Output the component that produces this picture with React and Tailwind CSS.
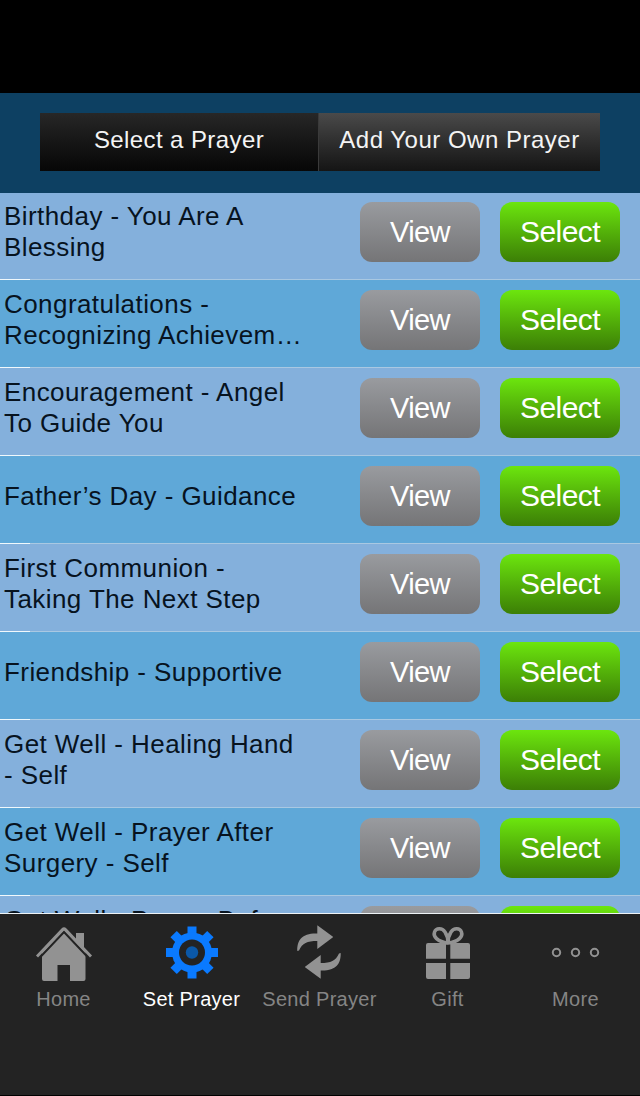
import React, { useState } from 'react';

const prayers = [
  { id: 1, lines: ['Birthday - You Are A', 'Blessing'] },
  { id: 2, lines: ['Congratulations -', 'Recognizing Achievem…'] },
  { id: 3, lines: ['Encouragement - Angel', 'To Guide You'] },
  { id: 4, lines: ['Father’s Day - Guidance'] },
  { id: 5, lines: ['First Communion -', 'Taking The Next Step'] },
  { id: 6, lines: ['Friendship - Supportive'] },
  { id: 7, lines: ['Get Well - Healing Hand', '- Self'] },
  { id: 8, lines: ['Get Well - Prayer After', 'Surgery - Self'] },
  { id: 9, lines: ['Get Well - Prayer Before', 'Surgery - Self'] },
];

const HomeIcon = () => (
  <svg width="64" height="64" viewBox="0 0 64 64" fill="#929292">
    <path d="M44 13h8v20l-8-8z" />
    <path d="M32 9 53.500 32V59q0 2-2 2H38V45H25.500v16H12q-2 0-2-2V32z" />
    <path d="M6 39.500 32 12 58 39.500" fill="none" stroke="#232323" strokeWidth="2" />
    <path d="M5 36.500 30.500 9.500q1.500-1.500 3 0L59 36.500" fill="none" stroke="#929292" strokeWidth="2.800" />
  </svg>
);

const GearIcon = () => (
  <svg width="64" height="64" viewBox="0 0 64 64" fill="#0a7aff">
    {[0, 45, 90, 135].map((angle) => (
      <rect key={angle} x="27.500" y="6.500" width="9" height="52" transform={`rotate(${angle} 32 32.500)`} />
    ))}
    <circle cx="32" cy="32.500" r="20" />
    <circle cx="32" cy="32.500" r="13" fill="#232323" />
    <circle cx="32" cy="32.500" r="6.200" fill="#0b58a8" />
  </svg>
);

const SendIcon = () => (
  <svg width="64" height="64" viewBox="0 0 64 64" fill="#929292">
    <path d="M9.300 31C9 20 14 13 29.300 13.500V5.300L45.300 17 29.300 29V21C19 21 14.500 23 11 30.500z" />
    <path d="M9.300 31C9 20 14 13 29.300 13.500V5.300L45.300 17 29.300 29V21C19 21 14.500 23 11 30.500z" transform="rotate(180 31 32)" />
  </svg>
);

const GiftIcon = () => (
  <svg width="64" height="64" viewBox="0 0 64 64" fill="#929292">
    <path d="M10 25q0-2 2-2h18v15.700H10zM34.300 23H52q2 0 2 2v13.700H34.300zM10 43h20v16H12q-2 0-2-2zM34.300 43H54v14q0 2-2 2H34.300z" />
    <path
      d="M32 23C21 22 17 16 18.500 12 20 8 26 7.500 29 12 31 15 32 18 32 23C43 22 47 16 45.500 12 44 8 38 7.500 35 12 33 15 32 18 32 23"
      fill="none"
      stroke="#929292"
      strokeWidth="3.500"
    />
  </svg>
);

const MoreIcon = () => (
  <svg width="64" height="64" viewBox="0 0 64 64" fill="none" stroke="#929292" strokeWidth="2">
    <circle cx="12.500" cy="32.500" r="3.700" />
    <circle cx="31.500" cy="32.500" r="3.700" />
    <circle cx="50.500" cy="32.500" r="3.700" />
  </svg>
);

const tabs = [
  { name: 'Home', icon: HomeIcon },
  { name: 'Set Prayer', icon: GearIcon },
  { name: 'Send Prayer', icon: SendIcon },
  { name: 'Gift', icon: GiftIcon },
  { name: 'More', icon: MoreIcon },
];

const PrayerRow = ({ prayer }) => (
  <li className="shrink-0 h-[88px] odd:bg-[#84b0dc] even:bg-[#5fa8d8]">
    <div className="h-[87px] pt-2.5 pr-5 pl-1 flex items-start gap-5">
      <div className="flex-1 h-[60px] flex flex-col justify-center text-[26px] leading-[31px] tracking-[0.43px] whitespace-nowrap text-[#07131f]">
        {prayer.lines.map((line) => (
          <span key={line}>{line}</span>
        ))}
      </div>
      <button className="w-[120px] h-[60px] rounded-xl bg-linear-to-b from-[#999b9f] to-[#757577] text-[29px] leading-[60px] tracking-[-0.6px] text-white">
        View
      </button>
      <button className="w-[120px] h-[60px] rounded-xl bg-linear-to-b from-[#6ce60e] to-[#3c7f06] text-[30px] leading-[60px] tracking-[-0.6px] text-white">
        Select
      </button>
    </div>
    <div className="h-px flex bg-[#a9c8e2]">
      <div className="w-[30px] bg-[#f0f8fc]" />
    </div>
  </li>
);

export default function App() {
  const [activeTab, setActiveTab] = useState('Set Prayer');

  return (
    <div className="w-[640px] h-[1096px] overflow-hidden flex flex-col bg-black font-['Liberation_Sans',Arial,sans-serif]">
      <div className="h-[93px] shrink-0" />
      <header className="relative z-10 h-[100px] shrink-0 px-10 pt-5 bg-[#0d4062]">
        <div className="h-[58px] flex text-2xl tracking-[0.4px] text-[#f4f4f4]">
          <button className="w-[279px] pb-1 bg-linear-to-b from-[#272727] to-[#070707] border-r border-[#3a3a3a]">
            Select a Prayer
          </button>
          <button className="flex-1 pb-1 whitespace-nowrap tracking-[0.5px] bg-linear-to-b from-[#4a4a4a] to-[#151515]">
            Add Your Own Prayer
          </button>
        </div>
      </header>

      <ul className="-mt-px h-[721px] shrink-0 overflow-hidden flex flex-col">
        {prayers.map((prayer) => (
          <PrayerRow key={prayer.id} prayer={prayer} />
        ))}
      </ul>

      <nav className="h-[182px] shrink-0 flex border-t border-[#eef3f6] bg-[#232323]">
        {tabs.map(({ name, icon: Icon }) => (
          <button
            key={name}
            onClick={() => setActiveTab(name)}
            className={`w-32 flex flex-col items-center justify-start pt-1.5 text-xl leading-6 tracking-[0.3px] whitespace-nowrap ${
              activeTab === name ? 'text-white' : 'text-[#858585]'
            }`}
          >
            <Icon />
            <span className="mt-[3px] pr-px">{name}</span>
          </button>
        ))}
      </nav>
    </div>
  );
}
